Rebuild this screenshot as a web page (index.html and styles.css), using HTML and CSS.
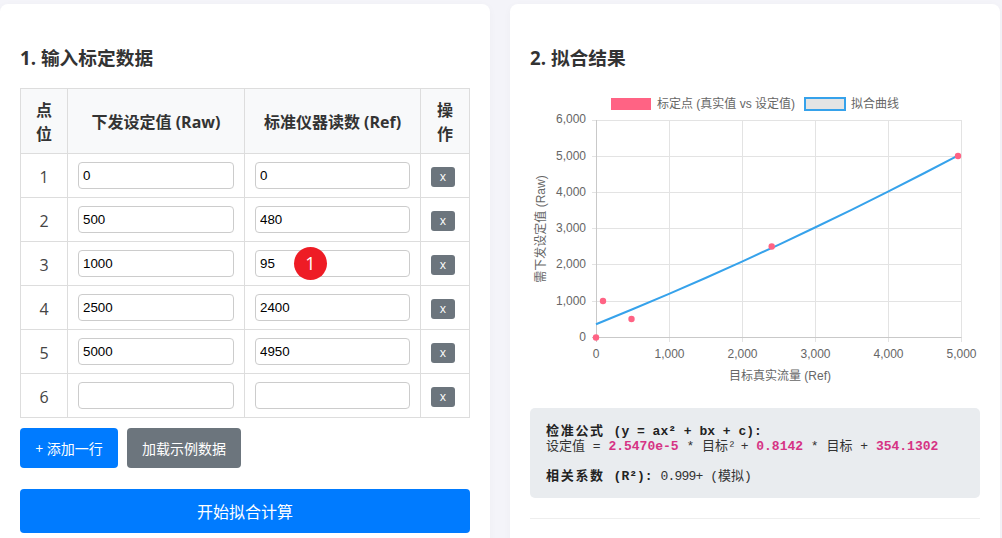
FILE: index.html
```html
<!DOCTYPE html>
<html lang="zh">
<head>
<meta charset="utf-8">
<title>标定</title>
<link rel="stylesheet" href="styles.css">
</head>
<body>
<div class="layout">
  <section class="card">
    <h2>1. 输入标定数据</h2>
    <table class="data">
      <colgroup><col class="c1"><col class="c2"><col class="c3"><col class="c4"></colgroup>
      <thead><tr><th>点位</th><th>下发设定值 (Raw)</th><th>标准仪器读数 (Ref)</th><th>操作</th></tr></thead>
      <tbody>
        <tr><td>1</td><td><input value="0"></td><td><input value="0"></td><td><button class="del">x</button></td></tr>
        <tr><td>2</td><td><input value="500"></td><td><input value="480"></td><td><button class="del">x</button></td></tr>
        <tr><td>3</td><td><input value="1000"></td><td class="anchor"><input value="95"><span class="badge">1</span></td><td><button class="del">x</button></td></tr>
        <tr><td>4</td><td><input value="2500"></td><td><input value="2400"></td><td><button class="del">x</button></td></tr>
        <tr><td>5</td><td><input value="5000"></td><td><input value="4950"></td><td><button class="del">x</button></td></tr>
        <tr><td>6</td><td><input></td><td><input></td><td><button class="del">x</button></td></tr>
      </tbody>
    </table>
    <div class="actions">
      <button class="btn blue">+ 添加一行</button>
      <button class="btn grey">加载示例数据</button>
    </div>
    <button class="calc">开始拟合计算</button>
  </section>
  <section class="card">
    <h2>2. 拟合结果</h2>
    <svg class="chart" width="450" height="304" viewBox="0 0 450 304">
      <g class="grid">
        <path d="M139.500 32V254M212.500 32V254M285.500 32V254M358.500 32V254M431.500 32V254"/>
        <path d="M62 32.500H431.500M62 68.500H431.500M62 104.500H431.500M62 140.500H431.500M62 176.500H431.500M62 213.500H431.500"/>
      </g>
      <path class="axis" d="M66.500 32V254M62 249.500H431.500"/>
      <rect x="81" y="10" width="40" height="12" class="lg1"/>
      <text x="127" y="19.500" class="tick">标定点 (真实值 vs 设定值)</text>
      <rect x="275" y="10" width="40" height="12" class="lg2"/>
      <text x="321" y="19.500" class="tick">拟合曲线</text>
      <g class="tick end">
        <text x="56" y="35">6,000</text><text x="56" y="71.500">5,000</text><text x="56" y="107.500">4,000</text>
        <text x="56" y="144">3,000</text><text x="56" y="180">2,000</text><text x="56" y="216.500">1,000</text><text x="56" y="253">0</text>
      </g>
      <g class="tick mid">
        <text x="66" y="270">0</text><text x="139.500" y="270">1,000</text><text x="212.500" y="270">2,000</text>
        <text x="285.500" y="270">3,000</text><text x="358.500" y="270">4,000</text><text x="431.500" y="270">5,000</text>
      </g>
      <text x="250" y="292" class="tick mid">目标真实流量 (Ref)</text>
      <text transform="translate(15 141) rotate(-90)" class="tick mid">需下发设定值 (Raw)</text>
      <polyline class="fit" points="66,236.200 102.500,221.300 139,205.800 175.500,190 212,173.600 248.500,156.800 285,139.500 321.500,121.800 358,103.700 394.500,85 427.400,67.900"/>
      <g class="pts">
        <circle cx="66" cy="249.500" r="3.200"/><circle cx="73" cy="213" r="3.200"/><circle cx="101.500" cy="231" r="3.200"/>
        <circle cx="241.700" cy="158.500" r="3.200"/><circle cx="428" cy="68" r="3.200"/>
      </g>
    </svg>
    <pre class="formula"><strong><span class="wide">检准公式</span> (y = ax² + bx + c):</strong>
设定值 = <b>2.5470e-5</b> * 目标<span class="sup">²</span> + <b>0.8142</b> * 目标 + <b>354.1302</b>

<strong><span class="wide">相关系数</span> (R²):</strong> <span class="tight">0.999+</span> (模拟)</pre>
    <hr class="rule">
  </section>
</div>
</body>
</html>
```
FILE: styles.css
```css
html, body { margin: 0; height: 538px; overflow: hidden; }
body { background: #f4f4f9; font-family: "Open Sans", "Noto Sans CJK SC", sans-serif; color: #333; }
.layout { display: flex; gap: 20px; align-items: flex-start; padding-top: 4px; height: 534px; overflow: hidden; }
.card { width: 490px; height: 600px; box-sizing: border-box; padding: 20px; background: #fff; border-radius: 8px; box-shadow: 0 2px 8px rgba(0,0,0,.03); flex: none; }
h2 { margin: 21px 0 17px; font-size: 18.720px; line-height: 26px; font-weight: 700; color: #333; }
.data { width: 450px; border-collapse: collapse; table-layout: fixed; font-size: 16px; }
.c1 { width: 47px; } .c2 { width: 177px; } .c3 { width: 176px; } .c4 { width: 49px; }
.data th, .data td { border: 1px solid #ddd; text-align: center; padding: 0 10px; }
.data th { background: #f8f9fa; font-weight: 700; height: 65px; line-height: 24px; font-size: 16px; padding-top: 1px; box-sizing: border-box; }
.data td { height: 43px; }
.data td:first-child { padding-top: 2px; box-sizing: border-box; color: #444; }
.data input { display: block; width: 100%; box-sizing: border-box; height: 27px; padding: 0 4px; border: 1px solid #ccc; border-radius: 4px; font: 13.330px "Liberation Sans", sans-serif; color: #000; background: #fff; margin-top: -1px; }
.anchor { position: relative; }
.badge { position: absolute; left: 49px; top: 5px; width: 33px; height: 33px; border-radius: 50%; background: #ee1c25; color: #fff; font-size: 18px; line-height: 33px; text-align: center; }
.del { display: block; margin: 2px auto 0 0; width: 24px; height: 20px; padding: 0; border: 0; border-radius: 3px; background: #6c757d; color: #fff; font: 12px/18px "Open Sans", sans-serif; }
.actions { display: flex; gap: 9px; margin-top: 10px; }
.btn { height: 40px; border: 0; border-radius: 4px; color: #fff; font: 14px "Open Sans", "Noto Sans CJK SC", sans-serif; padding: 0 15px; }
.blue { background: #007bff; width: 98px; } .grey { background: #6c757d; width: 114px; }
.calc { display: block; width: 450px; height: 44px; margin-top: 21px; border: 0; border-radius: 4px; background: #007bff; color: #fff; font: 16px "Open Sans", "Noto Sans CJK SC", sans-serif; }
.chart { display: block; }
.grid path { fill: none; stroke: #e3e3e3; stroke-width: 1; }
.axis { fill: none; stroke: #c9c9c9; stroke-width: 1; }
.tick, .tick text { font: 12px "Liberation Sans", "Noto Sans CJK SC", sans-serif; fill: #666; }
.end text { text-anchor: end; } .mid, .mid text { text-anchor: middle; }
.lg1 { fill: #ff6384; }
.lg2 { fill: #e4e4e4; stroke: #36a2eb; stroke-width: 2; }
.fit { fill: none; stroke: #36a2eb; stroke-width: 2; }
.pts circle { fill: #ff6384; }
.formula { margin: 16px 0 0; height: 90px; box-sizing: border-box; padding: 16px 16px 0; background: #e9ecef; border-radius: 5px; font: 13px/15px "Liberation Mono", "Noto Sans CJK SC", monospace; color: #333; }
.formula strong { font-weight: 700; color: #222; }
.formula b { color: #d63384; }
.wide { letter-spacing: 1.700px; margin-right: 1px; }
.sup { letter-spacing: -3px; }
.tight { letter-spacing: -.8px; }
.rule { margin: 20px 0 0; border: 0; border-top: 1px solid #eee; }
```
